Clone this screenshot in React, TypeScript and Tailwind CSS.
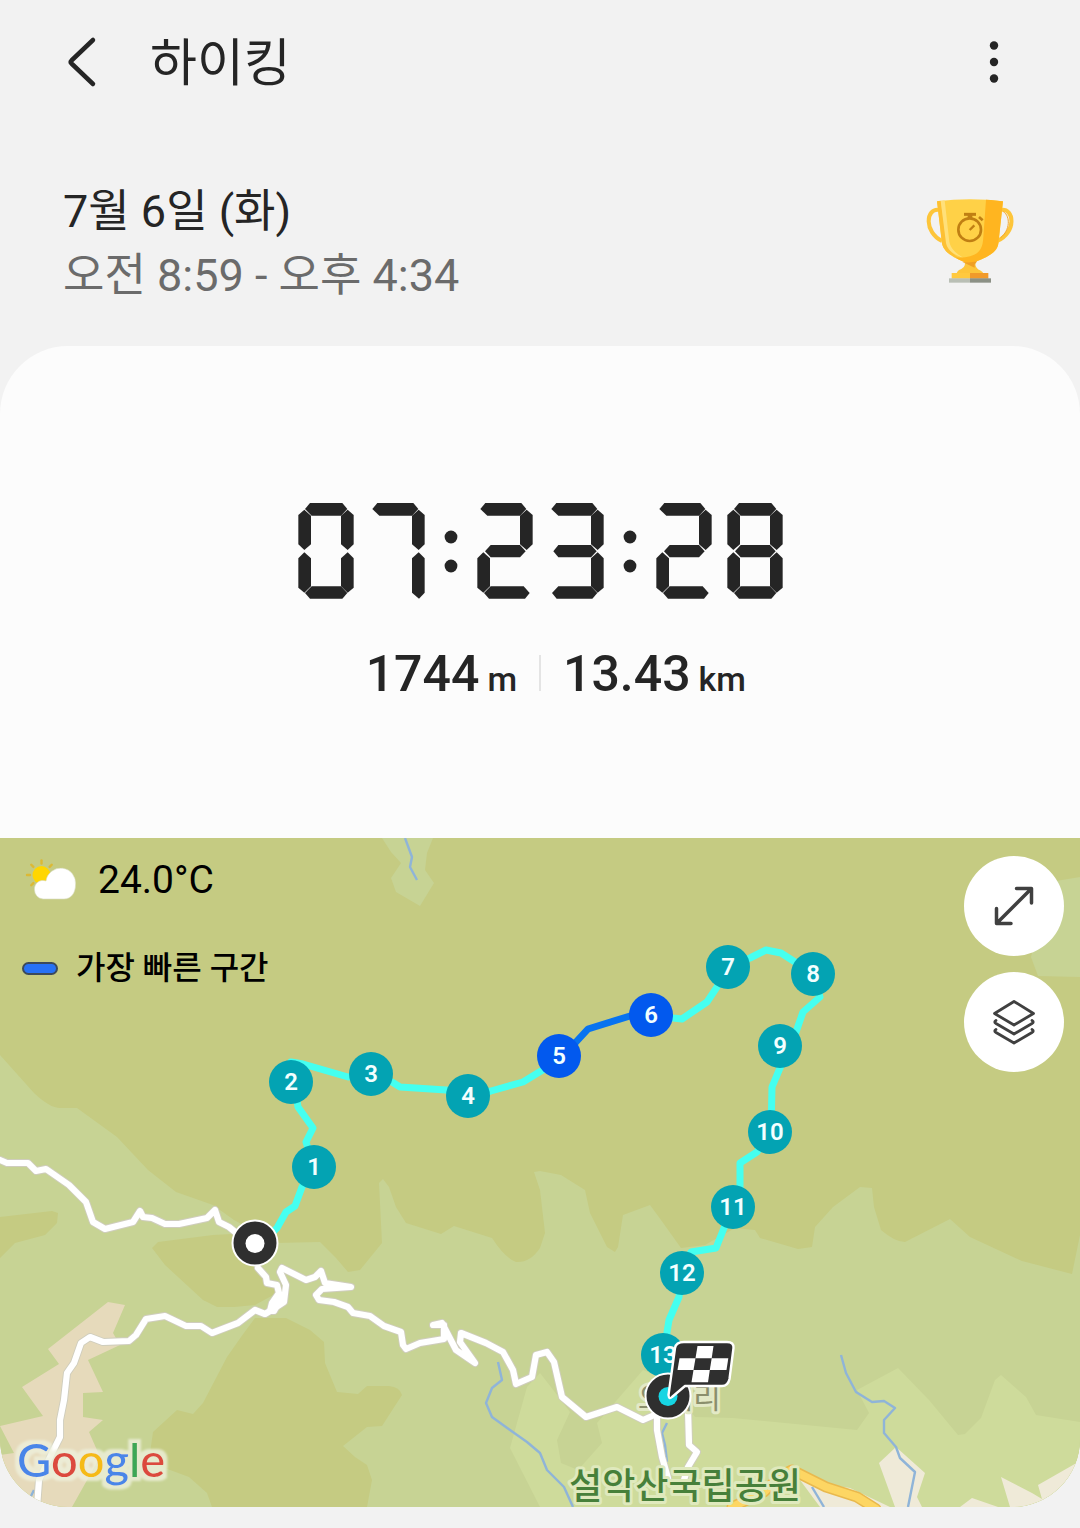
const LIGHT = "#c7d394";
const OLIVE = "#c5cb82";
const MEADOW = "#cedb9b";
const SAND = "#e6dabb";
const CREAM = "#efead8";
const RIVER = "#8fb4d8";
const ROUTE = "#45fff0";
const INK = "#252525";

/* Seven segment clock, one unit box of 166 x 288 per digit */
const SEGMENTS: Record<string, string> = {
  "0": "abcdef",
  "1": "bc",
  "2": "abged",
  "3": "abgcd",
  "4": "fgbc",
  "5": "afgcd",
  "6": "afgecd",
  "7": "abc",
  "8": "abcdefg",
  "9": "abcdfg",
};

function segmentPoints(name: string, on: string) {
  const has = (s: string) => on.includes(s);
  switch (name) {
    case "a":
      return has("f")
        ? "20,18 35,0 132,0 147,18 128,38 40,38"
        : "9,18 24,0 132,0 147,18 128,38 30,38";
    case "b":
      return "148,20 166,36 166,124 148,141 128,124 128,38";
    case "c":
      return has("d")
        ? "148,148 166,166 166,254 148,269 128,250 128,166"
        : "148,148 166,166 166,269 149,287 128,269 128,166";
    case "d": {
      const left = has("e") || has("f") ? "40,250" : "30,250";
      const right = has("c") ? "128,250 147,270 132,287" : "139,250 157,270 143,287";
      const end = has("e") ? "35,287 20,270" : "25,287 11,270";
      return `${left} ${right} ${end}`;
    }
    case "e":
      return "18,148 38,166 38,250 18,269 0,254 0,166";
    case "f":
      return "18,20 38,38 38,124 18,141 0,124 0,36";
    default:
      return has("e") || has("f")
        ? "23,145 40,126 128,126 145,145 128,163 40,163"
        : "15,145 30,126 128,126 145,145 128,163 30,163";
  }
}

function Digit({ value }: { value: string }) {
  const on = SEGMENTS[value];
  return (
    <svg viewBox="0 0 166 288" className="h-24 w-14" fill={INK} aria-hidden="true">
      {on.split("").map((s) => (
        <polygon key={s} points={segmentPoints(s, on)} />
      ))}
    </svg>
  );
}

function Colon() {
  return (
    <svg viewBox="0 0 52 96" className="h-24 w-[52px]" fill={INK} aria-hidden="true">
      <circle cx="26" cy="34" r="6.4" />
      <circle cx="26" cy="63" r="6.4" />
    </svg>
  );
}

function Clock({ value }: { value: string }) {
  return (
    <time className="flex justify-center" role="img" aria-label={value}>
      {value.split(":").map((pair, i) => (
        <span key={i} className="flex">
          {i > 0 && <Colon />}
          <span className="flex gap-[15px]">
            <Digit value={pair[0]} />
            <Digit value={pair[1]} />
          </span>
        </span>
      ))}
    </time>
  );
}

function Trophy() {
  return (
    <svg viewBox="78 54 264 256" className="h-[86px] w-[88px]" role="img" aria-label="트로피">
      <g fill="none" strokeWidth="12">
        <path d="M118 89 C76 82 72 156 126 182" stroke="#fdc53a" />
        <path d="M302 89 C344 82 350 156 292 182" stroke="#fdc53a" />
        <path d="M310 94 C332 108 330 150 302 172" stroke="#f3a62b" strokeWidth="3" />
      </g>
      <path d="M190 238 H232 C222 252 226 262 240 270 Q248 274 250 279 H170 Q172 270 184 266 Q202 256 190 238Z" fill="#fdc53a" />
      <path d="M111 63 Q210 51 309 63 L295 190 C290 222 245 238 210 250 C176 240 134 222 126 190Z" fill="#ffd147" />
      <path d="M111 63 L122 61 L140 188 C146 222 190 240 212 249 C176 240 134 222 126 190Z" fill="#fdc033" />
      <path d="M122 61 L134 60 L148 184 C152 206 172 222 190 232 C160 224 142 208 138 188Z" fill="#ffe07a" />
      <path d="M258 58 Q290 60 309 63 L295 190 C290 222 245 238 210 250 C190 244 180 240 168 232 C236 232 248 210 250 170Z" fill="#ffb520" />
      <path d="M186 244 Q205 249 232 243 L224 252 V262Z" fill="#ef9f25" />
      <path d="M155 278 H210 V295 H155Z" fill="#ffc93f" />
      <path d="M210 278 H265 V295 H210Z" fill="#f19a2a" />
      <path d="M147 294 H210 V307 H147Z" fill="#b9bfb5" />
      <path d="M210 294 H273 V307 H210Z" fill="#8c9186" />
      <g fill="none" stroke="#c07f13">
        <circle cx="209" cy="148" r="34" strokeWidth="8" />
        <path d="M192 102 H228" strokeWidth="9" />
        <path d="M210 104 V116" strokeWidth="14" />
        <path d="M237 110 L248 120" strokeWidth="8" />
        <path d="M209 149 L223 135" strokeWidth="7" />
      </g>
    </svg>
  );
}

function WeatherIcon() {
  return (
    <svg viewBox="22 858 54 44" className="h-11 w-[54px]" role="img" aria-label="구름 조금">
      <g stroke="#dcb935" strokeWidth="2.4" fill="none">
        {[0, 45, 90, 135, 180, 225, 270, 315].map((a) => (
          <path key={a} d="M41.5 863.5 V860.5" transform={`rotate(${a} 41.5 875)`} strokeLinecap="round" />
        ))}
      </g>
      <circle cx="41.5" cy="875" r="9" fill="#ffd600" />
      <path
        d="M43 899 A9 9 0 0 1 34.500 890 A8.500 8.500 0 0 1 46 881 A13.500 13.500 0 0 1 75.500 885 C75.500 893 71 899 64 899Z"
        fill="#fff"
        stroke="#d9dcc0"
        strokeWidth="0.6"
      />
    </svg>
  );
}

const MARKERS = [
  { n: 1, x: 314, y: 1167 },
  { n: 2, x: 291, y: 1082 },
  { n: 3, x: 371, y: 1074 },
  { n: 4, x: 468, y: 1096 },
  { n: 5, x: 559, y: 1056, fast: true },
  { n: 6, x: 651, y: 1015, fast: true },
  { n: 7, x: 728, y: 967 },
  { n: 8, x: 813, y: 974 },
  { n: 9, x: 780, y: 1046 },
  { n: 10, x: 770, y: 1132 },
  { n: 11, x: 733, y: 1207 },
  { n: 12, x: 682, y: 1273 },
  { n: 13, x: 663, y: 1355 },
];

const ROADS = [
  "M0 1160 L7 1163 L28 1163 L36 1171 L46 1169 L69 1185 L86 1202 L93 1222 L105 1229 L133 1222 L140 1211 L143 1217 L152 1218 L165 1224 L179 1224 L207 1218 L215 1210 L219 1222 L229 1227 L240 1236",
  "M258 1268 L266 1277 L267 1283 L277 1285 L279 1293 L272 1303 L270 1311 L274 1311 L282 1296 L274 1306",
  "M37 1507 L39 1480 L52 1453 L60 1437 L60 1420 L64 1400 L67 1373 L74 1363 L81 1343 L90 1337 L103 1342 L129 1341 L136 1335 L146 1319 L165 1316 L186 1326 L201 1326 L212 1333 L238 1323 L255 1310 L265 1314 L275 1308 L284 1302 L286 1285 L280 1272 L282 1268 L306 1280 L315 1277 L321 1271 L325 1283 L351 1287 L322 1289 L316 1295 L319 1300 L334 1302 L348 1307 L353 1313 L370 1316 L384 1326 L401 1332 L403 1345 L406 1349 L420 1343 L444 1339 L444 1325 L433 1325 L442 1323 L456 1350 L475 1363 L460 1342 L461 1333 L486 1343 L503 1352 L513 1370 L516 1384 L532 1377 L536 1355 L547 1352 L554 1362 L562 1397 L586 1417 L617 1407 L643 1420 L659 1413",
  "M657 1415 L657 1430 L662 1457 L668 1478",
  "M688 1408 L689 1445 L697 1452 L688 1467 L684 1480",
];

const RIVERS = [
  "M405 838 L412 857 L410 867 L417 880",
  "M841 1355 L846 1373 L856 1392 L872 1402 L884 1401 L895 1408 L884 1420 L884 1433 L896 1447 L900 1458 L915 1472 L908 1507",
  "M498 1362 L502 1380 L492 1388 L486 1403 L492 1417 L510 1430 L527 1442 L540 1453 L547 1470 L564 1487 L573 1507",
  "M667 1423 L662 1433 L665 1445 L667 1462",
  "M812 1487 L824 1507",
  "M52 1446 L46 1460 M34 1490 L28 1502",
];

function TrailMap() {
  return (
    <svg
      viewBox="0 838 1080 669"
      className="block w-full"
      role="img"
      aria-label="하이킹 경로 지도"
      fontFamily='Roboto, "Noto Sans CJK KR", sans-serif'
    >
      <defs>
        <filter id="halo" x="-10%" y="-20%" width="120%" height="140%">
          <feMorphology in="SourceAlpha" operator="dilate" radius="4" result="grown" />
          <feGaussianBlur in="grown" stdDeviation="1" result="soft" />
          <feFlood floodColor="#eef0dc" floodOpacity="0.8" />
          <feComposite in2="soft" operator="in" result="glow" />
          <feMerge>
            <feMergeNode in="glow" />
            <feMergeNode in="SourceGraphic" />
          </feMerge>
        </filter>
      </defs>
      <rect x="0" y="838" width="1080" height="669" fill={OLIVE} />
      <g fill={LIGHT}>
        <path d="M0 1055 L34 1093 Q50 1108 60 1108 H77 L117 1137 L148 1170 L176 1192 L213 1205 L234 1220 L275 1243 L320 1242 L336 1258 L348 1272 L360 1270 L382 1243 L379 1183 L383 1179 L389 1187 L396 1207 L406 1223 L441 1234 L454 1226 L492 1238 Q505 1258 516 1262 Q530 1263 540 1248 L545 1233 L540 1190 L534 1172 L540 1171 L561 1175 L585 1190 L590 1213 L607 1247 L615 1252 L618 1247 L623 1215 L650 1205 L661 1220 L681 1248 L705 1245 L735 1228 L755 1230 L760 1238 L798 1249 L812 1247 L815 1227 L833 1207 L860 1187 L872 1188 L874 1207 L881 1230 Q895 1242 905 1242 L950 1219 L970 1237 L1022 1261 L1072 1274 L1080 1235 V1507 H0Z" />
        <path d="M382 838 L391 852 L401 863 L391 878 L396 892 L420 906 L434 883 L425 870 L427 853 L433 838Z" />
        <path d="M1050 882 L1080 877 V977 L1038 976 L1031 957Z" />
      </g>
      <g fill={OLIVE}>
        <path d="M0 1217 L52 1211 L58 1213 L57 1223 L45 1235 L15 1243 L0 1258Z" />
        <path d="M152 1248 L158 1242 L213 1235 L250 1233 L262 1270 L277 1293 L255 1305 L234 1307 L217 1307 L203 1300 L165 1265Z" />
        <path d="M255 1318 L286 1318 L310 1330 L324 1342 L325 1363 L337 1392 L358 1394 L367 1386 L389 1386 Q400 1387 402 1395 L382 1426 L367 1427 L343 1446 L355 1457 L367 1465 L372 1480 L367 1507 H212 L207 1493 L189 1477 L162 1467 L150 1453 L153 1432 L177 1410 L193 1414 L203 1403 L227 1357 L241 1337Z" />
      </g>
      <path d="M527 1387 L540 1373 L561 1400 L570 1412 L557 1440 L561 1463 L578 1470 L602 1443 L597 1423 L643 1370 L668 1380 L695 1417 L733 1418 L857 1430 L869 1413 L857 1390 L898 1368 L929 1400 L958 1435 L965 1434 L981 1418 L995 1380 L1001 1375 L1026 1397 L1036 1415 L1080 1422 V1507 H540 L510 1448Z" fill={MEADOW} />
      <path d="M108 1302 L125 1305 L113 1333 L120 1345 L88 1360 L103 1392 L83 1393 L83 1417 L103 1420 L89 1432 L100 1457 L72 1507 H0 V1455 L14 1453 L0 1426 L43 1416 L22 1387 L59 1364 L48 1349Z" fill={SAND} />
      <g fill={CREAM}>
        <path d="M879 1463 L896 1447 L925 1473 L917 1497 L922 1507 H895Z" />
        <path d="M1001 1477 L1032 1493 L1042 1499 L1038 1485 L1080 1461 V1507 H1010Z" />
        <path d="M972 1498 L998 1507 H960Z" />
        <path d="M800 1480 L850 1488 L890 1507 H820Z" />
      </g>
      <g fill="none" stroke={RIVER} strokeWidth="2.400" strokeLinejoin="round">
        {RIVERS.map((d) => (
          <path key={d} d={d} />
        ))}
      </g>
      <g fill="none" strokeLinejoin="round" strokeLinecap="round">
        <path d="M732 1507 L764 1492 L780 1476 L792 1470 L826 1487 L857 1497 L876 1509" stroke="#e9b94d" strokeWidth="11" />
        <path d="M732 1507 L764 1492 L780 1476 L792 1470 L826 1487 L857 1497 L876 1509" stroke="#fdd663" strokeWidth="8" />
        <g stroke="#cfcdbd" strokeWidth="8">
          {ROADS.map((d) => (
            <path key={d} d={d} />
          ))}
        </g>
        <g stroke="#fff" strokeWidth="6.200">
          {ROADS.map((d) => (
            <path key={d} d={d} />
          ))}
        </g>
      </g>

      <text x="638" y="1408" fontSize="30" fill="#8b8f6c" stroke="#e3e9c6" strokeWidth="6" strokeLinejoin="round" paintOrder="stroke">
        오색리
      </text>
      <text x="685" y="1499" fontSize="36" fontWeight="500" textAnchor="middle" fill="#47803a" stroke="#dfe9bd" strokeWidth="6" strokeLinejoin="round" paintOrder="stroke">
        설악산국립공원
      </text>

      <g fill="none" strokeWidth="7" strokeLinejoin="round" stroke={ROUTE}>
        <path d="M262 1243 L277 1228 L286 1212 L295 1206 L302 1187 L314 1167 L306 1142 L313 1128 L298 1107 L291 1062 L303 1064 L348 1077 L371 1074 L392 1082 L400 1087 L446 1090 L468 1096 L491 1091 L523 1082 L559 1060" />
        <path d="M559 1056 L576 1042 L588 1029 L630 1016 L651 1015" stroke="#0773f0" />
        <path d="M651 1015 L673 1018 L682 1019 L707 1002 L717 987 L728 967 L750 958 L766 950 L781 953 L795 962 L813 974 L820 997 L803 1012 L796 1032 L780 1068 L772 1087 L771 1132 L757 1152 L740 1163 L740 1190 L724 1228 L716 1248 L691 1252 L682 1273 L679 1297 L669 1320 L665 1345" />
      </g>

      {MARKERS.map((m) => (
        <g key={m.n}>
          <circle cx={m.x} cy={m.y} r="22" fill={m.fast ? "#0259ee" : "#03a3b3"} />
          <text x={m.x} y={m.y + 8} fontSize="24" fontWeight="600" textAnchor="middle" fill="#f2ffff">
            {m.n}
          </text>
        </g>
      ))}

      <circle cx="255" cy="1243" r="22.500" fill="#2f2f2f" stroke="#fff" strokeWidth="2" />
      <circle cx="255" cy="1243.500" r="9.500" fill="#fff" />
      <circle cx="668" cy="1396" r="22.500" fill="#2f2f2f" stroke="#fff" strokeWidth="2" />
      <circle cx="668" cy="1396.500" r="9.500" fill="#16d5e3" />
      <path
        d="M684 1342 H727 Q734 1342 733.500 1348 L729.500 1379 Q728 1386 722 1386 H685 L672 1397 Q669 1400 668.500 1395 L672 1370 L675 1348 Q676 1342 684 1342Z"
        fill="#2f2f2f"
        stroke="#fff"
        strokeWidth="2.400"
        strokeLinejoin="round"
      />
      <g fill="#fff">
        <path d="M697.500 1346 H713.500 L711.700 1358.300 H695.500Z" />
        <path d="M679.500 1358.300 H695.500 L693.500 1370 H677.500Z" />
        <path d="M711.700 1358.300 H728.300 L726.500 1370 H709.800Z" />
        <path d="M693.500 1370 H709.800 L708 1382.300 H691.500Z" />
      </g>

      <text x="17" y="1477" fontFamily="Lato, sans-serif" fontSize="47" fontWeight="500" filter="url(#halo)">
        <tspan fill="#4a86e8">G</tspan>
        <tspan fill="#dc4a3d">o</tspan>
        <tspan fill="#f5bb17">o</tspan>
        <tspan fill="#4a86e8">g</tspan>
        <tspan fill="#3da757">l</tspan>
        <tspan fill="#dc4a3d">e</tspan>
      </text>
    </svg>
  );
}

function Metric({ value, unit }: { value: string; unit: string }) {
  return (
    <p className="flex items-baseline gap-2 font-medium leading-[60px]">
      <span className="text-[50px]">{value}</span>
      <span className="text-[34px]">{unit}</span>
    </p>
  );
}

export default function App() {
  return (
    <main className='min-h-screen bg-[#f2f2f2] pb-5 font-[Roboto,"Noto_Sans_CJK_KR",sans-serif] text-[#252525]'>
      <header className="flex h-[124px] items-center px-14">
        <button type="button" aria-label="뒤로" className="flex h-14 w-14 items-center justify-center">
          <svg viewBox="0 0 56 56" className="h-14 w-14" fill="none" stroke={INK} strokeWidth="4.500" strokeLinecap="round" strokeLinejoin="round">
            <path d="M37 6 L15.500 26.500 Q14 28 15.500 29.500 L37 50" />
          </svg>
        </button>
        <h1 className="ml-[38px] pt-1 text-[51px] leading-[64px]">하이킹</h1>
        <button type="button" aria-label="더보기" className="ml-auto flex h-14 w-[60px] items-center justify-center">
          <svg viewBox="0 0 16 48" className="h-12 w-4" fill={INK}>
            <circle cx="8" cy="7.500" r="4.200" />
            <circle cx="8" cy="24" r="4.200" />
            <circle cx="8" cy="40.500" r="4.200" />
          </svg>
        </button>
      </header>

      <section className="flex h-[222px] items-start justify-between pt-[56px] pr-[66px] pl-[63px]">
        <div className="text-[45px] leading-[64px]">
          <p>7월 6일 (화)</p>
          <p className="text-[#6b6b6b]">오전 8:59 - 오후 4:34</p>
        </div>
        <div className="pt-[18px]">
          <Trophy />
        </div>
      </section>

      <section className="overflow-hidden rounded-[68px] bg-[#fcfcfc]">
        <div className="pt-[157px] pb-[129px]">
          <Clock value="07:23:28" />
          <div className="mt-[45px] grid grid-cols-[1fr_auto_1fr] items-center gap-[22px]">
            <div className="flex justify-end">
              <Metric value="1744" unit="m" />
            </div>
            <span className="mb-2 h-9 w-[2px] bg-[#e4e4e4]" />
            <Metric value="13.43" unit="km" />
          </div>
        </div>

        <div className="relative">
          <TrailMap />
          <div className="absolute top-0 left-0 pt-3 pl-[22px] text-black">
            <p className="flex h-[60px] items-center gap-[22px] text-[39px]">
              <WeatherIcon />
              24.0°C
            </p>
            <p className="mt-7 flex h-[60px] items-center gap-[18px] text-[32px] font-medium">
              <span className="h-[13px] w-9 rounded-full border-2 border-[#3b4a5c] bg-[#2772f5]" />
              가장 빠른 구간
            </p>
          </div>
          <div className="absolute top-[18px] right-4 flex flex-col gap-4">
            <button type="button" aria-label="지도 확대" className="flex h-[100px] w-[100px] items-center justify-center rounded-full bg-white">
              <svg viewBox="0 0 44 44" className="h-11 w-11" fill="none" stroke="#404040" strokeWidth="3.500" strokeLinecap="round" strokeLinejoin="round">
                <path d="M5 39 L39 5 M24.500 4.500 H39.500 V19 M4.500 24.500 V39.500 H19" />
              </svg>
            </button>
            <button type="button" aria-label="지도 유형" className="flex h-[100px] w-[100px] items-center justify-center rounded-full bg-white">
              <svg viewBox="0 0 44 46" className="h-[46px] w-11" fill="none" stroke="#404040" strokeWidth="2.800" strokeLinecap="round" strokeLinejoin="round">
                <path d="M22 2.500 L41.500 14.500 L22 26 L2.500 14.500Z" />
                <path d="M4 21.500 Q1.500 23 4 24.500 L22 35 L40 24.500 Q42.500 23 40 21.500" />
                <path d="M4 30.500 Q1.500 32 4 33.500 L22 44 L40 33.500 Q42.500 32 40 30.500" />
              </svg>
            </button>
          </div>
        </div>
      </section>
    </main>
  );
}
